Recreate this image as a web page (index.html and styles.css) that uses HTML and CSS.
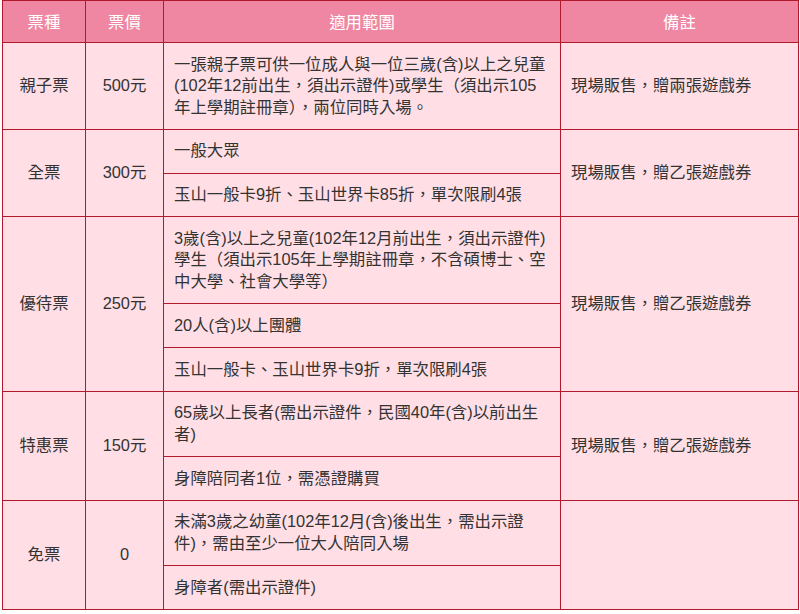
FILE: index.html
```html
<!DOCTYPE html>
<html lang="zh-Hant">
<head>
<meta charset="utf-8">
<title>票價</title>
<link rel="stylesheet" href="styles.css">
</head>
<body>
<table class="price-table">
  <colgroup>
    <col class="c-type">
    <col class="c-price">
    <col class="c-scope">
    <col class="c-note">
  </colgroup>
  <thead>
    <tr>
      <th>票種</th>
      <th>票價</th>
      <th>適用範圍</th>
      <th>備註</th>
    </tr>
  </thead>
  <tbody>
    <tr>
      <td class="center">親子票</td>
      <td class="center">500元</td>
      <td>一張親子票可供一位成人與一位三歲(含)以上之兒童<br>(102年12前出生，須出示證件)或學生（須出示105<br>年上學期註冊章），兩位同時入場。</td>
      <td>現場販售，贈兩張遊戲券</td>
    </tr>
    <tr>
      <td class="center" rowspan="2">全票</td>
      <td class="center" rowspan="2">300元</td>
      <td>一般大眾</td>
      <td rowspan="2">現場販售，贈乙張遊戲券</td>
    </tr>
    <tr>
      <td>玉山一般卡9折、玉山世界卡85折，單次限刷4張</td>
    </tr>
    <tr>
      <td class="center" rowspan="3">優待票</td>
      <td class="center" rowspan="3">250元</td>
      <td>3歲(含)以上之兒童(102年12月前出生，須出示證件)<br>學生（須出示105年上學期註冊章，不含碩博士、空<br>中大學、社會大學等）</td>
      <td rowspan="3">現場販售，贈乙張遊戲券</td>
    </tr>
    <tr>
      <td>20人(含)以上團體</td>
    </tr>
    <tr>
      <td>玉山一般卡、玉山世界卡9折，單次限刷4張</td>
    </tr>
    <tr>
      <td class="center" rowspan="2">特惠票</td>
      <td class="center" rowspan="2">150元</td>
      <td>65歲以上長者(需出示證件，民國40年(含)以前出生<br>者)</td>
      <td rowspan="2">現場販售，贈乙張遊戲券</td>
    </tr>
    <tr>
      <td>身障陪同者1位，需憑證購買</td>
    </tr>
    <tr>
      <td class="center" rowspan="2">免票</td>
      <td class="center" rowspan="2">0</td>
      <td>未滿3歲之幼童(102年12月(含)後出生，需出示證<br>件)，需由至少一位大人陪同入場</td>
      <td rowspan="2"></td>
    </tr>
    <tr>
      <td>身障者(需出示證件)</td>
    </tr>
  </tbody>
</table>
</body>
</html>
```

FILE: styles.css
```css
html, body {
  margin: 0;
  padding: 0;
  background: #ffffff;
}

body {
  font-family: "Liberation Sans", "Noto Sans CJK TC", sans-serif;
  font-size: 16.4px;
  color: #333333;
}

.price-table {
  margin-left: 2px;
  width: 796px;
  table-layout: fixed;
  border-collapse: collapse;
  border: 1px solid #b01a2c;
}

.c-type { width: 83px; }
.c-price { width: 78px; }
.c-scope { width: 397px; }
.c-note { width: 238px; }

.price-table th {
  background: #ef87a2;
  color: #ffffff;
  font-weight: normal;
  line-height: 22px;
  padding: 10px 10px 9px;
  border: 1px solid #b01a2c;
  border-top: none;
  text-align: center;
}

.price-table td {
  background: #ffdfe5;
  line-height: 21.5px;
  padding: 10.65px 10px;
  border: 1px solid #b01a2c;
  vertical-align: middle;
  text-align: left;
}

.price-table td.center {
  text-align: center;
}
```
